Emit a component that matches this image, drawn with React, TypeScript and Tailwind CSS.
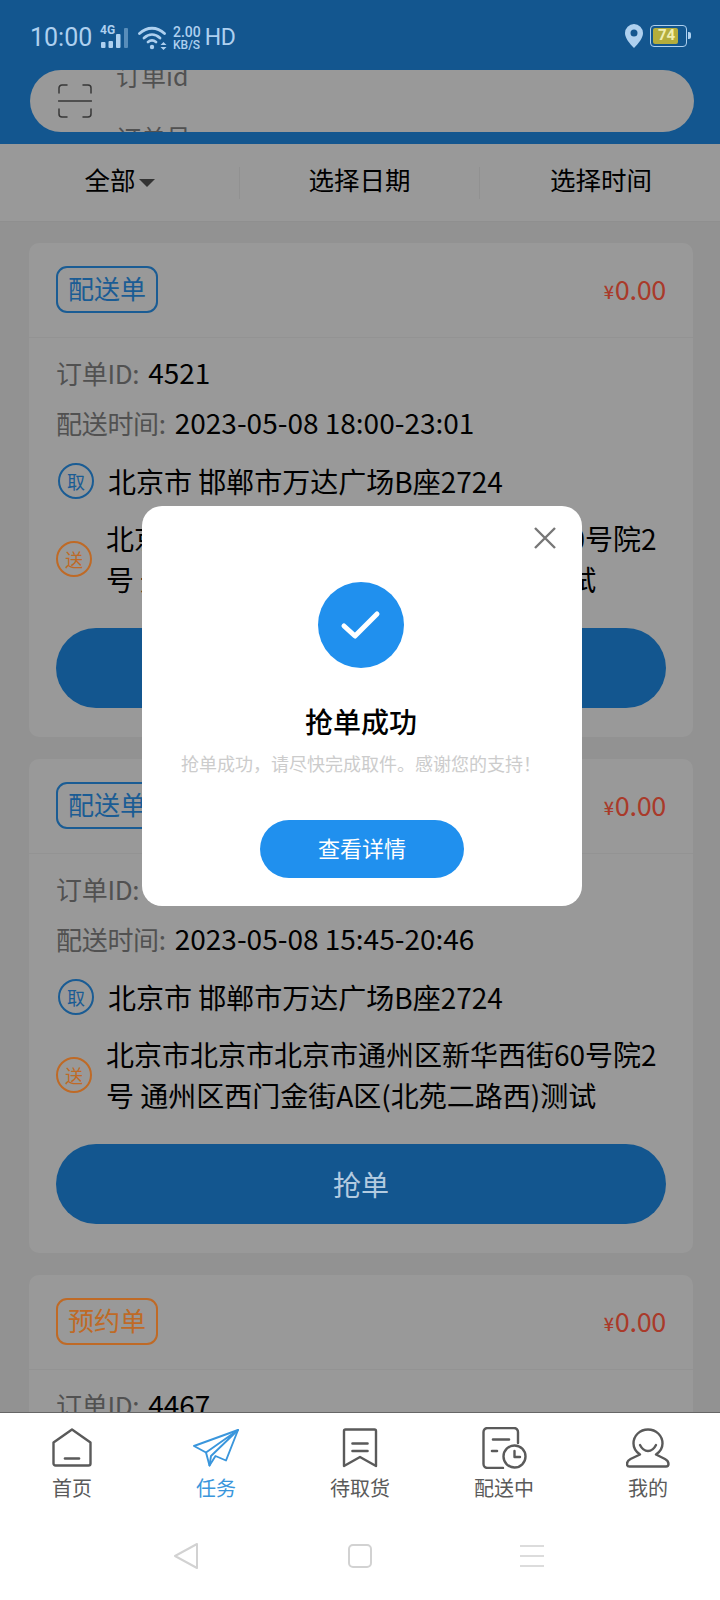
import React from 'react';

const orders = [
  {
    id: '4521',
    time: '2023-05-08 18:00-23:01',
    kind: '配送单',
    orange: false,
  },
  {
    id: '4519',
    time: '2023-05-08 15:45-20:46',
    kind: '配送单',
    orange: false,
  },
  {
    id: '4467',
    time: '2023-05-08 12:30-17:30',
    kind: '预约单',
    orange: true,
  },
];

function HomeIcon() {
  return (
    <svg width="40" height="39" viewBox="0 0 40 39" fill="none" stroke="#5a5a5a" strokeWidth="2.400" strokeLinejoin="round" strokeLinecap="round">
      <path d="M20 1.500 38.500 14.500V35.500a2 2 0 0 1-2 2H3.500a2 2 0 0 1-2-2V14.500Z" />
      <path d="M13 30.500H27" strokeWidth="2.600" />
    </svg>
  );
}

function PlaneIcon() {
  return (
    <svg width="46" height="38" viewBox="0 0 46 38" fill="none" stroke="#3a96dc" strokeWidth="1.900" strokeLinejoin="round" strokeLinecap="round">
      <path d="M45 1 1 17l12 6.500 3.500 13L22.500 27l10.500 4.500Z" />
      <path d="M45 1 13 23.500M45 1 18 27l-1.500 9.500" />
    </svg>
  );
}

function BookmarkIcon() {
  return (
    <svg width="36" height="40" viewBox="0 0 36 40" fill="none" stroke="#5a5a5a" strokeWidth="2.400" strokeLinejoin="round" strokeLinecap="round">
      <path d="M2 3a1.500 1.500 0 0 1 1.500-1.500h29A1.500 1.500 0 0 1 34 3v35L18 29 2 38Z" />
      <path d="M10.500 15.500H25.500M10.500 23H25.500" strokeWidth="2.600" />
    </svg>
  );
}

function OrderClockIcon() {
  return (
    <svg width="45" height="42" viewBox="0 0 45 42" fill="none" stroke="#5a5a5a" strokeWidth="2.400" strokeLinecap="round" strokeLinejoin="round">
      <path d="M36 16V5a4 4 0 0 0-4-4H5.500a4 4 0 0 0-4 4v32a4 4 0 0 0 4 4H21" />
      <path d="M11 12.500H27M10 24h5" strokeWidth="2.600" />
      <circle cx="32.500" cy="29.500" r="11" />
      <path d="M32.500 24v6h5.500" />
    </svg>
  );
}

function UserIcon() {
  return (
    <svg width="44" height="40" viewBox="0 0 44 40" fill="none" stroke="#5a5a5a" strokeWidth="2.400" strokeLinecap="round" strokeLinejoin="round">
      <path d="M14 26.500C9.500 23.500 7.500 19.500 7.500 15.500 7.500 7.500 14 1.500 22 1.500s14.500 6 14.500 14c0 4-2 8-6.500 11l9 4.500c2.500 1.300 3.500 3 3.500 5 0 1.700-1 2.500-2.500 2.500H3.500C2 38.500 1 37.700 1 36c0-2 1-3.700 3.500-5Z" />
      <path d="M14 17c2 4 5 6 8 6s6-2 8-6" />
    </svg>
  );
}

const tabs = [
  { label: '首页', icon: <HomeIcon /> },
  { label: '任务', icon: <PlaneIcon />, active: true },
  { label: '待取货', icon: <BookmarkIcon /> },
  { label: '配送中', icon: <OrderClockIcon /> },
  { label: '我的', icon: <UserIcon /> },
];

function SignalIcon() {
  return (
    <div className="relative w-[30px] h-[26px]">
      <span className="absolute left-0 top-[-2px] text-[12px] leading-[14px] font-bold">4G</span>
      <svg className="absolute left-0 top-0" width="30" height="26" viewBox="0 0 30 26" fill="#aed0ef">
        <rect x="1" y="17" width="4.500" height="6" rx="1" />
        <rect x="8.500" y="16" width="4.500" height="7" rx="1" />
        <rect x="16" y="9" width="4.500" height="14" rx="1" />
        <rect x="24" y="3" width="4" height="20" rx="1" fillOpacity="0.45" />
      </svg>
    </div>
  );
}

function WifiIcon() {
  return (
    <svg width="30" height="26" viewBox="0 0 30 26" fill="none" stroke="#aed0ef" strokeWidth="2.800" strokeLinecap="round">
      <path d="M1.500 8.500C9 1.500 19 1.500 26.500 8.500" />
      <path d="M6 13c5-4.500 11-4.500 16 0" />
      <path d="M10 17c2.500-2 5.500-2 8 0" />
      <circle cx="14" cy="22" r="2.200" fill="#aed0ef" stroke="none" />
      <path d="M25.500 17l3 3h-6ZM25.500 25l3-3h-6Z" fill="#aed0ef" stroke="none" />
    </svg>
  );
}

function ScanIcon() {
  return (
    <svg width="34" height="34" viewBox="0 0 34 34" fill="none" stroke="#5c5c5c" strokeWidth="1.500" strokeLinecap="round">
      <path d="M1 9V4a3 3 0 0 1 3-3h5M25 1h5a3 3 0 0 1 3 3v5" />
      <path d="M1 25v5a3 3 0 0 0 3 3h5M25 33h5a3 3 0 0 0 3-3v-5" />
      <path d="M0.500 17H33.500" />
    </svg>
  );
}

function OrderCard({ id, time, kind, orange }: (typeof orders)[number]) {
  return (
    <div className="w-[664px] h-[494px] shrink-0 ml-[29px] bg-white rounded-[10px]">
      <div className="h-[95px] pl-[27px] pr-[27px] pt-[23px] border-b border-[#f6f6f6] flex justify-between">
        <div
          className={
            orange
              ? 'relative z-20 w-[102px] h-[47px] rounded-[11px] border-2 border-[#bf6a26] text-[#bf6a26] text-[26px] leading-[40px] flex justify-center'
              : 'relative z-20 w-[102px] h-[47px] rounded-[11px] border-2 border-[#1a5c94] text-[#1a5c94] text-[26px] leading-[40px] flex justify-center'
          }
        >
          {kind}
        </div>
        <div className="relative z-20 h-[47px] flex items-center text-[#a93a2a] text-[27px] tracking-[-0.3px]">
          <span className="text-[18px] font-medium mt-[3px] mr-[1px]">¥</span>0.00
        </div>
      </div>
      <div className="pl-[27px] pr-[27px] pt-[9px]">
        <div className="h-[50px] flex items-center gap-[9px] text-[26px] text-[#888]">
          <span className="tracking-[-0.3px]">订单ID:</span>
          <span className="text-[28px] text-black">{id}</span>
        </div>
        <div className="h-[50px] flex items-center gap-[9px] text-[26px] text-[#888]">
          <span className="tracking-[-0.3px]">配送时间:</span>
          <span className="text-[28px] text-black">{time}</span>
        </div>
        <div className="mt-[16px] h-[36px] flex items-center gap-[14px]">
          <div className="relative z-20 w-[36px] h-[36px] ml-[2px] shrink-0 rounded-full border-2 border-[#1a5c94] text-[#1a5c94] text-[18px] flex items-center justify-center">
            取
          </div>
          <div className="text-[28px] leading-[36px] text-black whitespace-nowrap">北京市 邯郸市万达广场B座2724</div>
        </div>
        <div className="mt-[19px] flex items-center gap-[14px]">
          <div className="relative z-20 w-[36px] h-[36px] shrink-0 rounded-full border-2 border-[#bf6a26] text-[#bf6a26] text-[18px] flex items-center justify-center">
            送
          </div>
          <div className="text-[28px] leading-[41px] text-black">
            <div className="whitespace-nowrap">北京市北京市北京市通州区新华西街60号院2</div>
            <div className="whitespace-nowrap">号 通州区西门金街A区(北苑二路西)测试</div>
          </div>
        </div>
        <button className="mt-[28px] w-full h-[80px] rounded-full bg-[#2090ee] text-[28px]">
          <span className="relative z-20 text-[#b3cbe0]">抢单</span>
        </button>
      </div>
    </div>
  );
}

export default function App() {
  return (
    <div className="relative w-[720px] h-[1600px] overflow-hidden flex flex-col bg-white font-['Noto_Sans_CJK_SC',sans-serif]">
      <div className="relative h-[1412px] shrink-0 overflow-hidden bg-[#f4f4f4]">
        {/* Header */}
        <div className="h-[144px] bg-[#2090ee]">
          <div className="relative z-20 h-[70px] pt-[6px] pl-[30px] pr-[33px] flex items-center justify-between text-[#aed0ef] font-['Roboto',sans-serif]">
            <div className="flex items-center">
              <span className="text-[25px] w-[70px]">10:00</span>
              <SignalIcon />
              <div className="ml-[8px]">
                <WifiIcon />
              </div>
              <div className="ml-[5px] flex flex-col items-start text-[12px] font-medium leading-[12px]">
                <span className="text-[14px] leading-[14px]">2.00</span>
                <span>KB/S</span>
              </div>
              <span className="ml-[4px] text-[23px] tracking-[-0.5px]">HD</span>
            </div>
            <div className="flex items-center gap-[7px] mt-[-4px]">
              <svg width="18" height="24" viewBox="0 0 18 24">
                <path fillRule="evenodd" fill="#aed0ef" d="M9 0a9 9 0 0 1 9 9c0 5-4.500 10.500-9 15C4.500 19.500 0 14 0 9a9 9 0 0 1 9-9Zm0 5.500a3.500 3.500 0 1 0 0 7 3.500 3.500 0 0 0 0-7Z" />
              </svg>
              <div className="relative w-[37px] h-[22px] rounded-[4px] border-[1.5px] border-[#aed0ef] p-[2px]">
                <div className="h-full w-[25px] rounded-[2px] bg-[#b4ad3c]" />
                <span className="absolute left-[7px] top-0 text-[15px] leading-[19px] font-bold text-[#f0eeb0]">74</span>
                <span className="absolute right-[-5px] top-[6px] w-[3px] h-[7px] rounded-r-[2px] bg-[#aed0ef]" />
              </div>
            </div>
          </div>
          <div className="ml-[30px] mr-[26px] h-[62px] rounded-full bg-white overflow-hidden flex items-center">
            <div className="ml-[28px]">
              <ScanIcon />
            </div>
            <div className="ml-[24px] h-[62px] relative">
              <div className="flex flex-col gap-[32px] mt-[-10px] text-[25px] leading-[30px] text-[#888]">
                <span>订单id</span>
                <span>订单号</span>
              </div>
            </div>
          </div>
        </div>

        {/* Filter */}
        <div className="h-[78px] bg-white grid grid-cols-3 items-center text-[25.500px] text-black border-b border-[#eeeeee]">
          <div className="h-[32px] border-r border-[#f2f2f2] flex items-center justify-center gap-[3px]">
            <span className="mt-[-6px]">全部</span>
            <span className="w-0 h-0 border-x-[8px] border-t-[8px] border-x-transparent border-t-[#555]" />
          </div>
          <div className="h-[32px] border-r border-[#f2f2f2] flex items-center justify-center">
            <span className="mt-[-6px]">选择日期</span>
          </div>
          <div className="h-[32px] flex items-center justify-center">
            <span className="mt-[-6px] ml-[2px]">选择时间</span>
          </div>
        </div>

        {/* Orders */}
        <div className="pt-[21px] flex flex-col gap-[22px]">
          {orders.map((o) => (
            <OrderCard key={o.id} {...o} />
          ))}
        </div>

        {/* Dim layer */}
        <div className="absolute inset-0 z-10 bg-black/40" />

        {/* Success dialog */}
        <div className="absolute inset-0 z-30 flex items-center justify-center">
          <div className="relative w-[440px] h-[400px] ml-[4px] pr-[2px] rounded-[20px] bg-white flex flex-col items-center">
            <svg className="absolute right-[26px] top-[21px]" width="22" height="22" viewBox="0 0 22 22" stroke="#777" strokeWidth="2.400">
              <path d="M1 1 21 21M21 1 1 21" />
            </svg>
            <div className="mt-[76px] w-[86px] h-[86px] rounded-full bg-[#2090ee] flex items-center justify-center">
              <svg width="42" height="32" viewBox="0 0 42 32" fill="none" stroke="#fff" strokeWidth="5" strokeLinecap="round" strokeLinejoin="round">
                <path d="M4 17 15 27 37 5" />
              </svg>
            </div>
            <div className="mt-[33px] text-[28px] leading-[40px] font-medium text-black">抢单成功</div>
            <div className="mt-[10px] text-[18px] leading-[24px] text-[#ccc] whitespace-nowrap">抢单成功，请尽快完成取件。感谢您的支持！</div>
            <button className="mt-[45px] ml-[2px] w-[204px] h-[58px] rounded-full bg-[#2090ee] text-white text-[22px]">
              <span className="relative top-[-2px]">查看详情</span>
            </button>
          </div>
        </div>
      </div>

      {/* Tab bar */}
      <div className="h-[188px] shrink-0 bg-white border-t border-[#666] flex flex-col">
        <div className="grid grid-cols-5 pt-[14px]">
          {tabs.map((t) => (
            <div key={t.label} className="flex flex-col items-center">
              <div className="h-[41px] flex items-center justify-center">{t.icon}</div>
              <span className={t.active ? 'mt-[8px] text-[20px] leading-[24px] text-[#3a96dc]' : 'mt-[8px] text-[20px] leading-[24px] text-[#5a5a5a]'}>
                {t.label}
              </span>
            </div>
          ))}
        </div>
        <div className="mt-[42px] pr-[4px] flex items-center justify-center">
          <svg width="26" height="28" viewBox="0 0 26 28" fill="none" stroke="#d2d2d2" strokeWidth="2" strokeLinejoin="round">
            <path d="M24 2 2 14l22 12Z" />
          </svg>
          <div className="ml-[149px] w-[24px] h-[24px] rounded-[5px] border-2 border-[#d2d2d2]" />
          <svg className="ml-[148px]" width="24" height="24" viewBox="0 0 24 24" stroke="#dcdcdc" strokeWidth="2">
            <path d="M0 2H24M0 12H24M0 22H24" />
          </svg>
        </div>
      </div>
    </div>
  );
}
